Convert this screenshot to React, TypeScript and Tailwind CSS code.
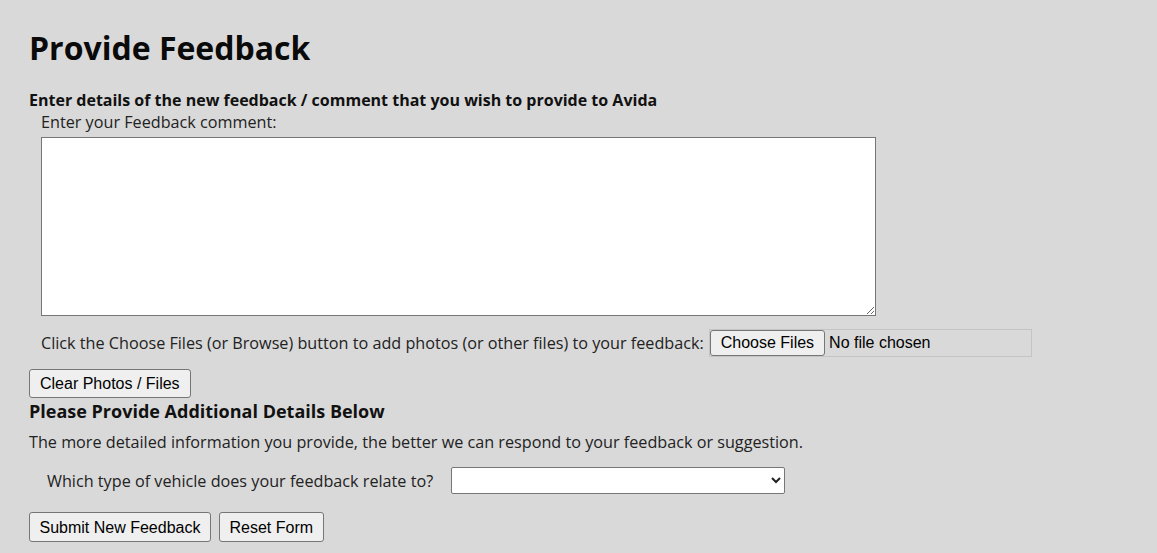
import React from "react";

const btn =
  "rounded-[3px] border border-[#767676] bg-[#efefef] font-['Liberation_Sans',Arial,sans-serif] text-[16px] leading-[19px] text-black";

const App: React.FC = () => {
  return (
    <div className="min-h-screen bg-[#d9d9d9] pl-[29px] pt-[24px] font-['Open_Sans',sans-serif] text-[#222]">
      <h1 className="text-[32px] font-bold leading-[48px] text-[#0a0a0a]">Provide Feedback</h1>

      <form className="mt-[17px]" onSubmit={(e) => e.preventDefault()}>
        <p className="text-[16px] font-bold leading-[22px] text-[#111]">
          Enter details of the new feedback / comment that you wish to provide to Avida
        </p>
        <div className="pl-[12px]">
          <label className="block text-[16.2px] leading-[22px]">Enter your Feedback comment:</label>
          <textarea className="mt-[4px] block h-[179px] w-[835px] border border-[#767676] bg-white" />

          <div className="mt-[13px] flex items-center gap-[5px]">
            <span className="text-[16.2px] leading-[28px]">
              Click the Choose Files (or Browse) button to add photos (or other files) to your feedback:
            </span>
            <input
              type="file"
              multiple
              className="h-[28px] w-[323px] border border-[#c4c4c4] font-['Liberation_Sans',Arial,sans-serif] text-[16px] text-black file:mr-[4px] file:h-[26px] file:rounded-[3px] file:border file:border-solid file:border-[#767676] file:bg-[#efefef] file:px-[10px] file:text-[16px] file:text-black"
            />
          </div>
        </div>

        <button type="button" className={`${btn} mt-[12px] h-[29px] px-[10px]`}>
          Clear Photos / Files
        </button>

        <h2 className="text-[18px] font-bold leading-[26px] text-[#111]">Please Provide Additional Details Below</h2>
        <p className="mt-[7px] text-[16.2px] leading-[22px]">
          The more detailed information you provide, the better we can respond to your feedback or suggestion.
        </p>

        <div className="mt-[14px] flex items-center gap-[18px] pl-[18px]">
          <label className="text-[16.2px] leading-[22px]">Which type of vehicle does your feedback relate to?</label>
          <select className="h-[27px] w-[334px] rounded-[2px] border border-[#767676] bg-white font-['Liberation_Sans',Arial,sans-serif] text-[16px]">
            <option value=""></option>
            <option>Motorhome</option>
            <option>Caravan</option>
            <option>Camper Trailer</option>
          </select>
        </div>

        <div className="mt-[18px] flex gap-[8px]">
          <button type="submit" className={`${btn} h-[30px] px-[9.5px]`}>
            Submit New Feedback
          </button>
          <button type="reset" className={`${btn} h-[30px] px-[9.5px]`}>
            Reset Form
          </button>
        </div>
      </form>
    </div>
  );
};

export default App;
